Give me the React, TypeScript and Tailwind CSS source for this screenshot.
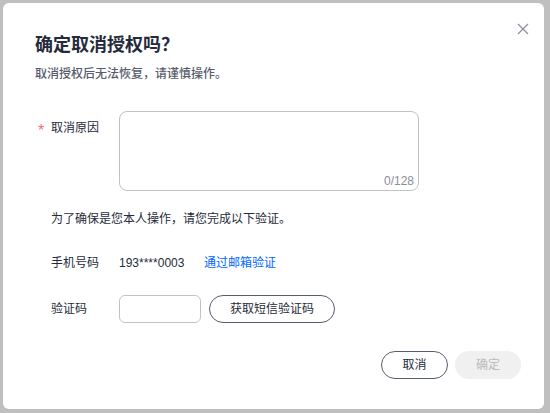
import React from "react";

export default function App() {
  const font = { fontFamily: '"Liberation Sans", "Noto Sans CJK SC", sans-serif' };
  return (
    <div className="w-[550px] h-[413px] bg-[#bfbfbf] pt-[3px] pl-[3px] pr-[6px] pb-[4px]" style={font}>
      <div className="relative w-full h-full bg-white rounded-[6px] pl-[32px] pr-[23px] pt-[30px]">
        <button className="absolute right-[14px] top-[19px] w-[14px] h-[14px] flex items-center justify-center text-[#8a8e99]">
          <svg width="12" height="12" viewBox="0 0 12 12" fill="none" stroke="#8a8e99" strokeWidth="1.2">
            <path d="M1 1 L11 11 M11 1 L1 11" />
          </svg>
        </button>
        <div className="text-[18px] leading-[24px] font-bold text-[#252b3a]">确定取消授权吗？</div>
        <div className="mt-[8px] text-[12px] leading-[18px] font-medium text-[#575d6c]">取消授权后无法恢复，请谨慎操作。</div>

        <div className="mt-[28px] flex items-start">
          <div className="relative w-[84px] pl-[16px] pt-[8px] text-[12px] leading-[18px] text-[#252b3a]">
            <span className="absolute left-[3px] top-[11px] text-[#f66f6a] text-[16px] leading-[18px]">*</span>
            取消原因
          </div>
          <div className="relative w-[300px] h-[80px] border border-[#c2c2c2] rounded-[8px]">
            <span className="absolute right-[4px] bottom-[1px] text-[12px] leading-[16px] text-[#8a8e99]">0/128</span>
          </div>
        </div>

        <div className="mt-[19px] pl-[16px] text-[12px] leading-[18px] text-[#252b3a]">为了确保是您本人操作，请您完成以下验证。</div>

        <div className="mt-[26px] flex items-center text-[12px] leading-[18px] text-[#252b3a]">
          <div className="w-[84px] pl-[16px]">手机号码</div>
          <div className="w-[85px] text-[#252b3a]">193****0003</div>
          <div className="text-[#0066ff]">通过邮箱验证</div>
        </div>

        <div className="mt-[23px] flex items-center text-[12px] text-[#252b3a]">
          <div className="w-[84px] pl-[16px] leading-[18px]">验证码</div>
          <div className="w-[82px] h-[28px] border border-[#c2c2c2] rounded-[6px]" />
          <button className="ml-[8px] w-[126px] h-[28px] border border-[#575d6c] rounded-full text-[12px] text-[#252b3a] flex items-center justify-center">获取短信验证码</button>
        </div>

        <div className="mt-[28px] flex justify-end gap-[7px]">
          <button className="w-[67px] h-[28px] border border-[#575d6c] rounded-full text-[12px] text-[#252b3a] flex items-center justify-center">取消</button>
          <button className="w-[66px] h-[28px] bg-[#f0f0f0] rounded-full text-[12px] text-[#bbbbbb] flex items-center justify-center">确定</button>
        </div>
      </div>
    </div>
  );
}
